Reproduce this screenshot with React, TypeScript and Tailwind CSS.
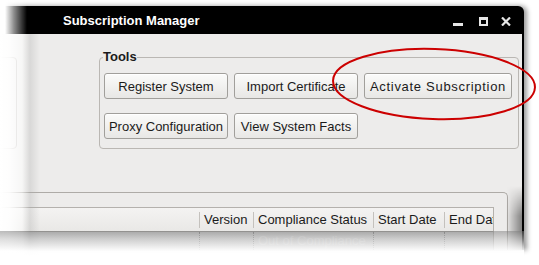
import React from 'react'

// ── SUBSCRIPTION MANAGER (faded window screenshot) ───────────────
// GNOME-style window: black title bar, Tools group with 5 buttons,
// product table header cut off at the bottom. Edges fade to white.

const font = "font-['Liberation_Sans',Arial,sans-serif]"

function Button({ label, wide }: { label: string; wide?: boolean }) {
  return (
    <button
      className={`h-[26px] rounded-[3px] border border-[#a19f9b] bg-[linear-gradient(#fbfbfa,#e8e7e5)] text-[13px] leading-none text-[#1b1b1b] shadow-[inset_0_1px_0_#ffffff] ${
        wide ? 'tracking-[0.7px]' : ''
      }`}
    >
      {label}
    </button>
  )
}

function HeaderSep() {
  return <div className="h-[16px] w-px shrink-0 bg-[#c4c1bd]" />
}

export default function App() {
  return (
    <div className={`relative h-[265px] w-[539px] overflow-hidden bg-white ${font}`}>
      <div className="pt-[6px]">
        <div className="relative h-[244px] w-[524px] rounded-tr-[6px] bg-black pr-[2px] shadow-[3px_0_5px_rgba(0,0,0,0.4)]">
          {/* title bar */}
          <div className="flex h-[28px] items-center pl-[63px] pr-[11px]">
            <span className="text-[13px] font-bold leading-none text-white">Subscription Manager</span>
            <div className="ml-auto flex items-start self-start pt-[11px]">
              <div className="mt-[6px] h-[3px] w-[10px] bg-[#e6e6e6]" />
              <div className="ml-[16px] h-[9px] w-[9px] border-2 border-t-[3px] border-[#e6e6e6]" />
              <svg className="ml-[13px]" width="10" height="9" viewBox="0 0 10 9">
                <path d="M1 0.5 L9 8.5 M9 0.5 L1 8.5" stroke="#e6e6e6" strokeWidth="2.2" />
              </svg>
            </div>
          </div>

          {/* client area */}
          <div className="h-[216px] overflow-hidden bg-[#edeceb]">
            <div className="flex pt-[23px]">
              <div className="ml-[-44px] h-[92px] w-[61px] shrink-0 rounded-[4px] border border-[#bab7b3]" />
              <div className="relative ml-[82px] h-[92px] w-[420px] shrink-0 rounded-[4px] border border-[#bab7b3] pl-[4px] pt-[15px]">
                <span className="absolute left-[3px] top-[-9px] bg-[#edeceb] text-[13px] font-bold leading-[15px] text-[#1b1b1b]">
                  Tools
                </span>
                <div className="grid grid-cols-[124px_124px_148px] gap-x-[6px] gap-y-[14px]">
                  <Button label="Register System" />
                  <Button label="Import Certificate" />
                  <Button label="Activate Subscription" wide />
                  <Button label="Proxy Configuration" />
                  <Button label="View System Facts" />
                </div>
              </div>
            </div>

            {/* installed products frame */}
            <div className="ml-[-30px] mt-[43px] w-[538px] rounded-tr-[5px] border border-b-0 border-[#aeaba7] pl-[10px] pr-[13px] pt-[14px]">
              <div className="overflow-hidden border border-b-0 border-[#b4b1ad]">
                <div className="flex h-[24px] items-center border-b border-[#a9a6a2] bg-[linear-gradient(#f4f3f2,#e9e8e6)] text-[13px] text-[#1b1b1b]">
                  <div className="w-[217px] shrink-0" />
                  <HeaderSep />
                  <div className="w-[53px] shrink-0 pl-[4px]">Version</div>
                  <HeaderSep />
                  <div className="w-[119px] shrink-0 pl-[4px]">Compliance Status</div>
                  <HeaderSep />
                  <div className="w-[70px] shrink-0 pl-[4px]">Start Date</div>
                  <HeaderSep />
                  <div className="w-[48px] shrink-0 overflow-hidden whitespace-nowrap pl-[4px]">End Date</div>
                </div>
                <div className="flex h-[20px] bg-[#d6d6d6] text-[13px] leading-[18px] text-[#e6e6e6]">
                  <div className="w-[217px] shrink-0" />
                  <div className="w-[54px] shrink-0 border-l border-dotted border-[#8a8a8a]" />
                  <div className="w-[120px] shrink-0 whitespace-nowrap border-l border-dotted border-[#8a8a8a] pl-[4px]">
                    Out of Compliance
                  </div>
                  <div className="w-[71px] shrink-0 border-l border-dotted border-[#8a8a8a]" />
                  <div className="w-[80px] shrink-0 border-l border-dotted border-[#8a8a8a]" />
                </div>
              </div>
            </div>
          </div>

          {/* inner right-edge shading near the bottom */}
          <div className="absolute right-[2px] top-[180px] h-[64px] w-[16px] bg-[linear-gradient(to_right,rgba(0,0,0,0),rgba(0,0,0,0.45))] [mask-image:linear-gradient(to_bottom,transparent,black_30px)]" />
        </div>
      </div>

      {/* left fade: title bar and client area */}
      <div className="absolute left-0 top-0 h-[34px] w-[30px] bg-[linear-gradient(to_right,#fff_0px,#fff_5px,rgba(255,255,255,0.55)_14px,rgba(255,255,255,0)_27px)]" />
      <div className="absolute bottom-0 left-0 top-[34px] w-[42px] bg-[linear-gradient(to_right,#fff_0px,rgba(255,255,255,0.9)_10px,rgba(255,255,255,0.55)_22px,rgba(170,170,170,0.3)_30px,rgba(255,255,255,0)_40px)]" />

      {/* bottom fade */}
      <div className="absolute left-0 top-[231px] h-[34px] w-[524px] bg-[linear-gradient(to_bottom,rgba(120,120,120,0.5)_0px,rgba(200,200,200,0.6)_8px,rgba(255,255,255,0.95)_20px,#fff_26px)]" />

      {/* red highlight ellipse */}
      <svg className="pointer-events-none absolute left-0 top-0" width="539" height="265">
        <ellipse cx="434" cy="84" rx="101" ry="35" fill="none" stroke="#cc0000" strokeWidth="2" transform="rotate(2 434 84)" />
      </svg>
    </div>
  )
}
